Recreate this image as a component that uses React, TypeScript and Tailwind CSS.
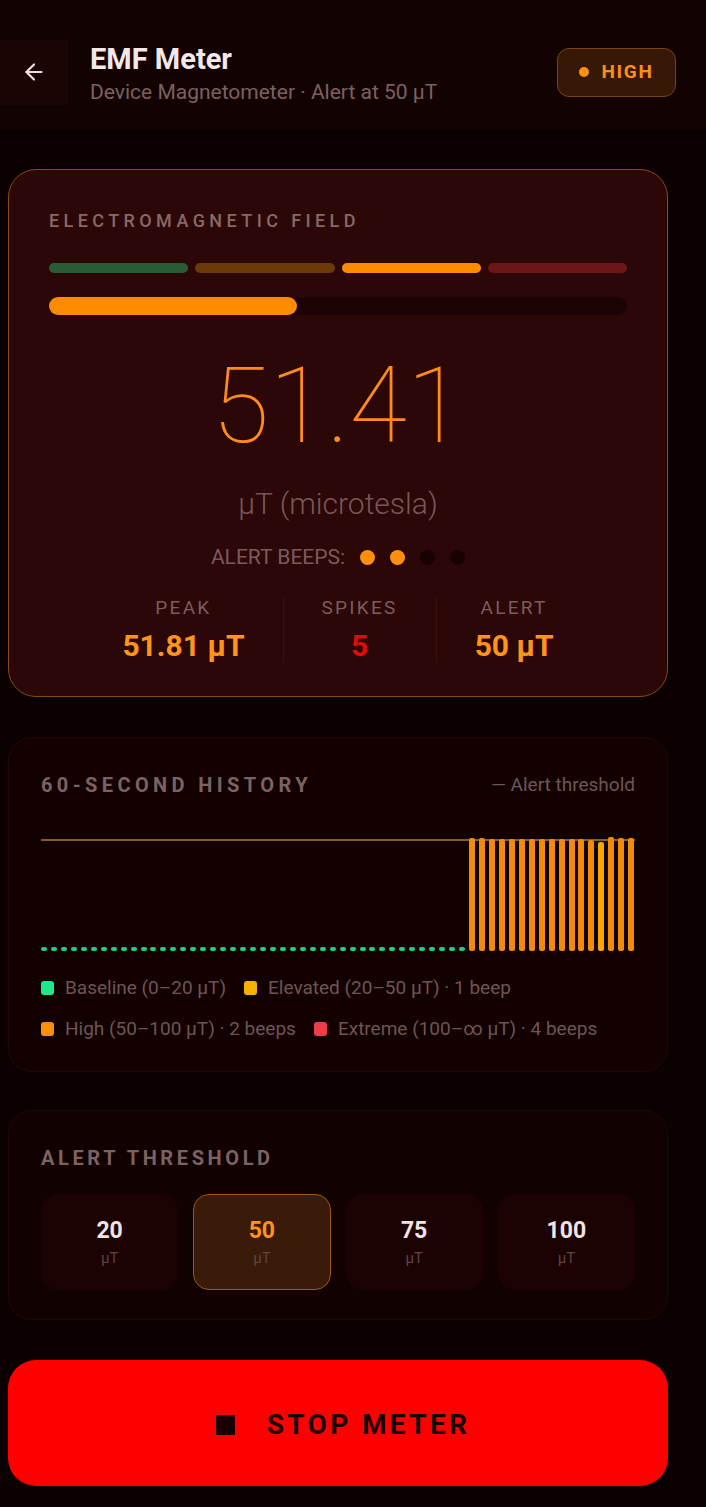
import { ArrowLeft } from "lucide-react";

const segments = ["bg-[#2a5b37]", "bg-[#6c3a09]", "bg-[#ff8c00]", "bg-[#6b1717]"];

const baseline = Array.from({ length: 43 }, () => 0.6);
const recent = [51.3, 51.4, 51.0, 51.1, 51.0, 51.1, 51.0, 51.1, 51.0, 51.1, 51.0, 51.1, 50.6, 49.4, 51.81, 51.2, 51.3];
const history = [...baseline, ...recent];

const THRESHOLD = 50;
const LINE_PX = 110;

function barColor(v: number) {
  if (v < 20) return "bg-[#1fcf7d]";
  if (v < 50) return "bg-[#f7a800]";
  if (v < 100) return "bg-[#f28a0c]";
  return "bg-[#f04050]";
}

const legend = [
  { color: "bg-[#1de98b]", label: "Baseline (0–20 µT)" },
  { color: "bg-[#f5b300]", label: "Elevated (20–50 µT) · 1 beep" },
  { color: "bg-[#ff8f0a]", label: "High (50–100 µT) · 2 beeps" },
  { color: "bg-[#f03c48]", label: "Extreme (100–∞ µT) · 4 beeps" },
];

const thresholds = [20, 50, 75, 100];

export default function App() {
  return (
    <div className="min-h-[1507px] w-[706px] bg-[#0b0101] font-['Roboto',sans-serif]">
      {/* Header */}
      <header className="flex h-[130px] items-center bg-[#130202] pr-[30px] pt-[14px]">
        <button className="flex h-[65px] w-[68px] items-center justify-center bg-[#1a0404] text-[#f2dcdc]">
          <ArrowLeft className="h-[26px] w-[26px]" strokeWidth={2} />
        </button>
        <div className="ml-[22px] flex-1 pt-[3px]">
          <h1 className="text-[29px] font-bold leading-[34px] text-[#f4e8e8]">EMF Meter</h1>
          <p className="mt-[3px] text-[21px] leading-[26px] text-[#7d6060]">
            Device Magnetometer · Alert at 50 µT
          </p>
        </div>
        <div className="flex h-[49px] w-[119px] items-center justify-center gap-[12px] rounded-[12px] border border-[#7a4313] bg-[#351805]">
          <span className="h-[10px] w-[10px] rounded-full bg-[#ff9010]" />
          <span className="text-[19px] font-bold tracking-[0.09em] text-[#ff9010]">HIGH</span>
        </div>
      </header>

      <main className="ml-[8px] w-[660px] pt-[39px]">
        {/* Main reading */}
        <section className="h-[528px] rounded-[28px] border border-[#8a4a18] bg-[#2b0707] px-[40px] pt-[40px]">
          <h2 className="text-[18px] font-medium leading-[22px] tracking-[0.245em] text-[#8a6868]">
            ELECTROMAGNETIC FIELD
          </h2>
          <div className="mt-[31px] flex gap-[7px]">
            {segments.map((c) => (
              <div key={c} className={`h-[10px] flex-1 rounded-full ${c}`} />
            ))}
          </div>
          <div className="mt-[24px] h-[18px] w-full rounded-full bg-[#1c0202]">
            <div className="h-full rounded-full bg-[#ff8c00]" style={{ width: `${(51.41 / 120) * 100}%` }} />
          </div>

          <div className="mt-[42px] text-center text-[105px] font-thin leading-[100px] text-[#ff8c1a]">51.41</div>
          <div className="mt-[30px] text-center text-[30px] font-light leading-[34px] text-[#7a5656]">µT (microtesla)</div>

          <div className="mt-[24px] flex items-center justify-center gap-[9px]">
            <span className="mr-[6px] text-[21px] leading-[24px] text-[#7c5a5a]">ALERT BEEPS:</span>
            <span className="h-[15px] w-[15px] rounded-full bg-[#ff900c]" />
            <span className="ml-[6px] h-[15px] w-[15px] rounded-full bg-[#ff900c]" />
            <span className="ml-[6px] h-[15px] w-[15px] rounded-full bg-[#1a0101]" />
            <span className="ml-[6px] h-[15px] w-[15px] rounded-full bg-[#1a0101]" />
          </div>

          <div className="mt-[28px] flex justify-center">
            <div className="px-[38px] text-center">
              <div className="text-[19px] leading-[22px] tracking-[0.12em] text-[#7c5c5c]">PEAK</div>
              <div className="mt-[10px] text-[30px] font-bold leading-[34px] text-[#ff9418]">51.81 µT</div>
            </div>
            <div className="border-l border-[#3e1010] px-[38px] text-center">
              <div className="text-[19px] leading-[22px] tracking-[0.12em] text-[#7c5c5c]">SPIKES</div>
              <div className="mt-[10px] text-[30px] font-bold leading-[34px] text-[#e00a0a]">5</div>
            </div>
            <div className="border-l border-[#3e1010] px-[38px] text-center">
              <div className="text-[19px] leading-[22px] tracking-[0.12em] text-[#7c5c5c]">ALERT</div>
              <div className="mt-[10px] text-[30px] font-bold leading-[34px] text-[#ff9418]">50 µT</div>
            </div>
          </div>
        </section>

        {/* History */}
        <section className="mt-[40px] h-[335px] rounded-[24px] border border-[#240606] bg-[#130101] px-[32px] pt-[35px]">
          <div className="flex items-center justify-between">
            <h2 className="text-[20px] font-bold leading-[24px] tracking-[0.22em] text-[#7d6262]">60-SECOND HISTORY</h2>
            <span className="text-[19px] leading-[22px] text-[#6e5656]">— Alert threshold</span>
          </div>

          <div className="relative mt-[28px] flex h-[126px] items-end justify-between">
            <div className="absolute inset-x-0 h-[2px] bg-[#8a5a1e]" style={{ bottom: LINE_PX }} />
            {history.map((v, i) => (
              <div
                key={i}
                className={`relative w-[6px] rounded-[2px] ${barColor(v)}`}
                style={{ height: v < 20 ? 4 : Math.round((v / THRESHOLD) * LINE_PX) }}
              />
            ))}
          </div>

          <div className="mt-[26px] flex flex-wrap gap-x-[18px] gap-y-[19px]">
            {legend.map((l) => (
              <div key={l.label} className="flex items-center gap-[11px]">
                <span className={`h-[14px] w-[13px] rounded-[3px] ${l.color}`} />
                <span className="text-[19px] leading-[22px] text-[#6f5454]">{l.label}</span>
              </div>
            ))}
          </div>
        </section>

        {/* Alert threshold */}
        <section className="mt-[38px] h-[210px] rounded-[24px] border border-[#240606] bg-[#110101] px-[32px] pt-[35px]">
          <h2 className="text-[20px] font-bold leading-[24px] tracking-[0.18em] text-[#7d6262]">ALERT THRESHOLD</h2>
          <div className="mt-[24px] grid grid-cols-4 gap-[15px]">
            {thresholds.map((t) => {
              const active = t === 50;
              return (
                <button
                  key={t}
                  className={`flex h-[96px] flex-col items-center justify-center rounded-[16px] border ${
                    active ? "border-[#a0581a] bg-[#3a1a08]" : "border-[#1c0303] bg-[#1c0202]"
                  }`}
                >
                  <span className={`text-[23px] font-bold leading-[28px] ${active ? "text-[#ff9418]" : "text-[#f2e4e4]"}`}>
                    {t}
                  </span>
                  <span className="mt-[4px] text-[15px] leading-[18px] text-[#5e4444]">µT</span>
                </button>
              );
            })}
          </div>
        </section>

        {/* Stop */}
        <button className="mt-[40px] flex h-[126px] w-full items-center justify-center gap-[32px] rounded-[28px] bg-[#ff0000] pl-[10px] pt-[4px]">
          <span className="h-[20px] w-[19px] bg-[#1a0000]" />
          <span className="text-[28px] font-bold tracking-[0.12em] text-[#1a0000]">STOP METER</span>
        </button>
      </main>
    </div>
  );
}
